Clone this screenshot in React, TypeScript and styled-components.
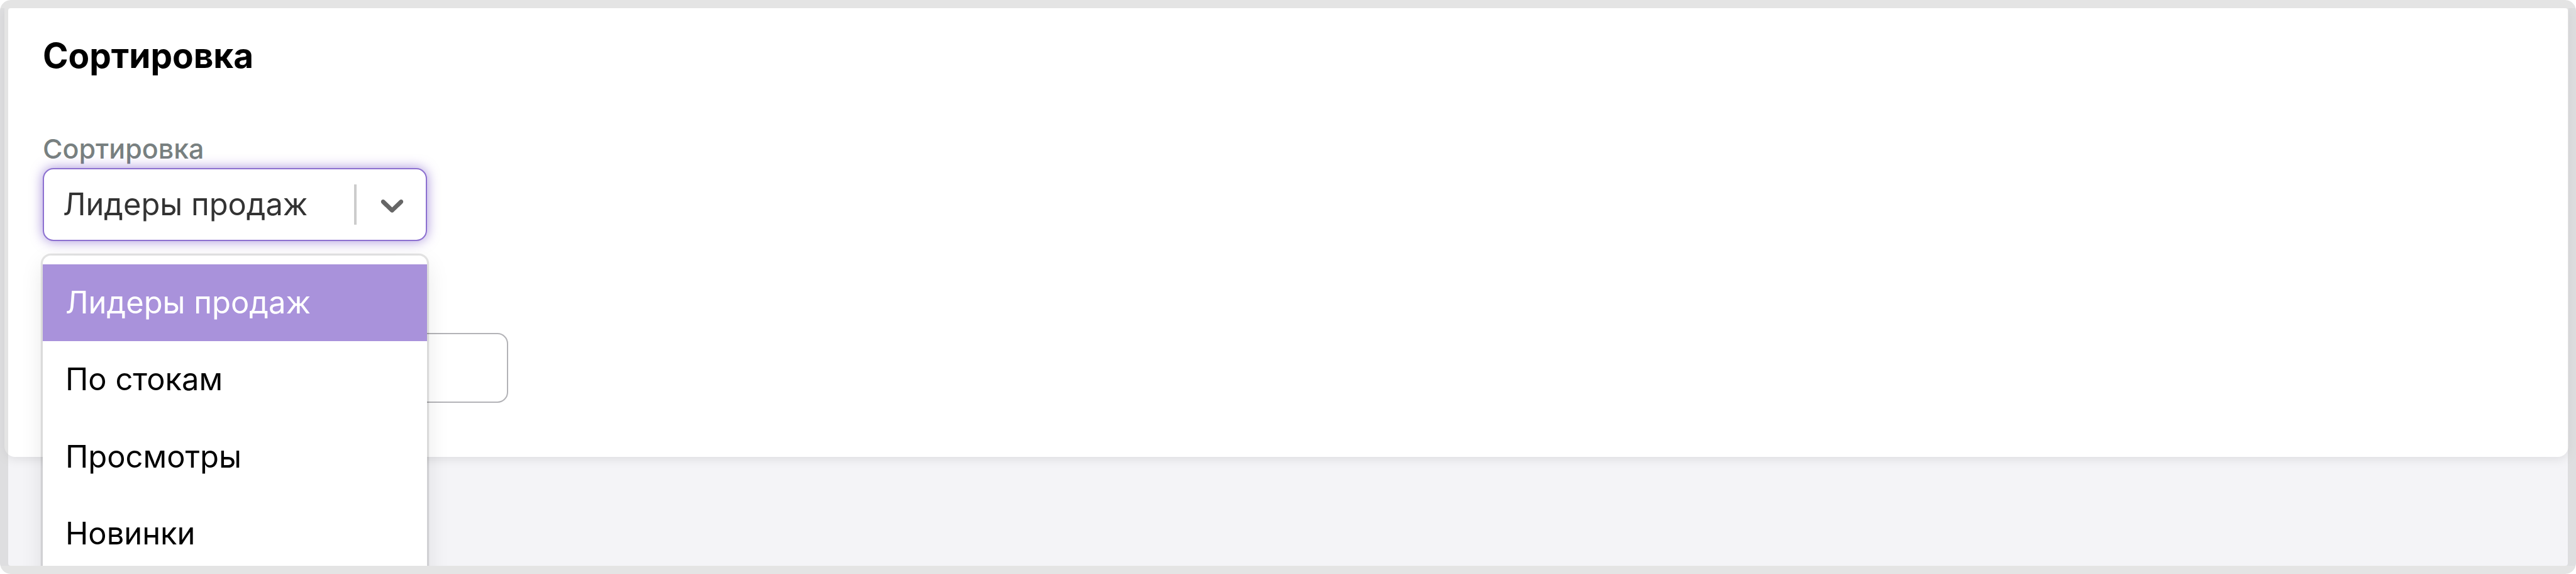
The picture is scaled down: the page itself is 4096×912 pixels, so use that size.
import React from 'react';
import styled, { createGlobalStyle } from 'styled-components';

const GlobalStyle = createGlobalStyle`
  *, *::before, *::after { box-sizing: border-box; }
  body { margin: 0; background: #fff; font-family: Inter, "Liberation Sans", sans-serif; }
`;

const Window = styled.div`
  position: relative;
  width: 4096px;
  height: 912px;
  padding: 13px 0;
  overflow: hidden;
  border-radius: 17px;
  background: #fff;

  &::after {
    content: '';
    position: absolute;
    inset: 0;
    border: 13px solid rgba(195, 195, 195, 0.45);
    border-radius: 17px;
    pointer-events: none;
  }
`;

const Viewport = styled.main`
  height: 886px;
  overflow: hidden;
  background: #f4f4f7;
`;

const Card = styled.section`
  height: 713px;
  margin: 0 12px 0 7px;
  padding: 43px 61px 0;
  border-radius: 0 0 17px 17px;
  background: #fff;
  box-shadow: 0 3px 17px rgba(0, 0, 0, 0.1);
`;

const Title = styled.h2`
  margin: 0 0 91px;
  font-size: 54.9px;
  line-height: 64px;
  font-weight: 700;
  color: #000;
`;

const Label = styled.label`
  display: block;
  margin-bottom: 6px;
  font-size: 43px;
  line-height: 50px;
  font-weight: 500;
  color: #788080;
`;

const Select = styled.div`
  position: relative;
  width: 611px;
  margin-bottom: 146px;
`;

const Control = styled.div`
  display: flex;
  align-items: center;
  height: 116px;
  border: 2px solid #8c70d0;
  border-radius: 17px;
  background: #fff;
  box-shadow: 0 0 19px rgba(107, 70, 193, 0.6);
`;

const Value = styled.span`
  flex: 1;
  padding-left: 30px;
  font-size: 48.8px;
  line-height: 60px;
  color: #333;
  white-space: nowrap;
`;

const Separator = styled.span`
  width: 4px;
  height: 64px;
  background: #ccc;
`;

const Indicator = styled.span`
  display: flex;
  align-items: center;
  justify-content: center;
  width: 110px;
  padding-left: 3px;
  color: #666;
`;

const Menu = styled.ul`
  position: absolute;
  top: 139px;
  left: 0;
  width: 100%;
  height: 640px;
  margin: 0;
  padding: 14px 0;
  list-style: none;
  border-radius: 13px;
  background: #fff;
  box-shadow: 0 0 0 3.3px rgba(0, 0, 0, 0.1), 0 13px 37px rgba(0, 0, 0, 0.1);
`;

const Option = styled.li<{ $active?: boolean }>`
  height: 122.4px;
  padding: 31px 36px 0;
  font-size: 48.9px;
  line-height: 60px;
  white-space: nowrap;
  color: ${({ $active }) => ($active ? '#fff' : '#000')};
  background: ${({ $active }) => ($active ? '#a992db' : 'transparent')};
`;

const TextInput = styled.input`
  display: block;
  width: 740px;
  height: 111px;
  padding: 0 32px;
  border: 2px solid #b3b3b7;
  border-radius: 17px;
  background: #fff;
  font: inherit;
  font-size: 49px;
  outline: none;
`;

const options = ['Лидеры продаж', 'По стокам', 'Просмотры', 'Новинки'];

function Chevron() {
  return (
    <svg width="61" height="61" viewBox="0 0 20 20" fill="currentColor" aria-hidden="true">
      <path d="M4.516 7.548c0.436-0.446 1.043-0.481 1.576 0l3.908 3.747 3.908-3.747c0.533-0.481 1.141-0.446 1.574 0 0.436 0.445 0.408 1.197 0 1.615-0.406 0.418-4.695 4.502-4.695 4.502-0.217 0.223-0.502 0.335-0.787 0.335s-0.57-0.112-0.789-0.335c0 0-4.287-4.084-4.695-4.502s-0.436-1.17 0-1.615z" />
    </svg>
  );
}

export default function App() {
  return (
    <>
      <GlobalStyle />
      <Window>
        <Viewport>
          <Card>
            <Title>Сортировка</Title>
            <Label>Сортировка</Label>
            <Select>
              <Control>
                <Value>{options[0]}</Value>
                <Separator />
                <Indicator>
                  <Chevron />
                </Indicator>
              </Control>
              <Menu>
                {options.map((option, index) => (
                  <Option key={option} $active={index === 0}>
                    {option}
                  </Option>
                ))}
              </Menu>
            </Select>
            <TextInput type="text" />
          </Card>
        </Viewport>
      </Window>
    </>
  );
}
